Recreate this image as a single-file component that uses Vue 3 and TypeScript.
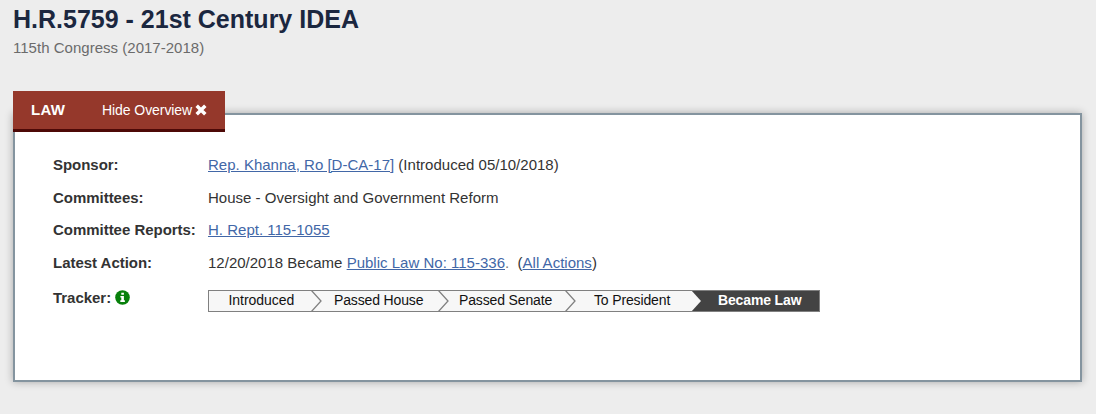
<script setup lang="ts">
interface Step {
  label: string
  kind: string
}

const steps: Step[] = [
  { label: 'Introduced', kind: 'first' },
  { label: 'Passed House', kind: 'house' },
  { label: 'Passed Senate', kind: 'senate' },
  { label: 'To President', kind: 'president' },
  { label: 'Became Law', kind: 'current' },
]
</script>

<template>
  <main class="page">
    <h1 class="title"><span>H.R.5759 - 21st Century IDEA</span></h1>
    <p class="congress"><span>115th Congress (2017-2018)</span></p>

    <section class="overview">
      <div class="tab">
        <strong class="law">LAW</strong>
        <span class="toggle">Hide Overview</span>
        <svg class="close" viewBox="0 0 12 12" width="12" height="12">
          <path d="M1.7 1.7L10.3 10.3M10.3 1.7L1.7 10.3" fill="none" stroke="#fff" stroke-width="3.5" />
        </svg>
      </div>
      <div class="panel">
        <dl class="facts">
          <dt>Sponsor:</dt>
          <dd><a>Rep. Khanna, Ro [D-CA-17]</a> (Introduced 05/10/2018)</dd>
          <dt>Committees:</dt>
          <dd>House - Oversight and Government Reform</dd>
          <dt>Committee Reports:</dt>
          <dd><a>H. Rept. 115-1055</a></dd>
          <dt>Latest Action:</dt>
          <dd>12/20/2018 Became <a>Public Law No: 115-336</a><span class="dot">.</span>&nbsp; (<a>All Actions</a>)</dd>
          <dt class="tracker-label">
            Tracker:
            <svg class="info" viewBox="0 0 15 15" width="15" height="15">
              <circle cx="7.5" cy="7.5" r="7.3" fill="#07800b" />
              <path d="M6.3 2.7h2.6v2.1H6.3zM5.4 6h3.5v4.3h1v1.6H5.3v-1.6h1V7.5h-.9z" fill="#fff" />
            </svg>
          </dt>
          <dd class="tracker-cell">
            <ol class="tracker">
              <li v-for="step in steps" :key="step.label" class="step" :class="step.kind">
                <svg v-if="step.kind !== 'first'" class="chevron" viewBox="0 0 11 20" width="11" height="20">
                  <path
                    d="M0 -1L10 10L0 21"
                    fill="#f7f7f7"
                    :stroke="step.kind === 'current' ? 'none' : '#808080'"
                    stroke-width="1.3"
                  />
                </svg>
                <span>{{ step.label }}</span>
              </li>
            </ol>
          </dd>
        </dl>
      </div>
    </section>
  </main>
</template>

<style>
body {
  background: #ededed;
}
</style>

<style scoped>
.page {
  box-sizing: border-box;
  width: 1096px;
  height: 414px;
  padding: 4px 14px 0 13px;
  overflow: hidden;
  font-family: 'Liberation Sans', Arial, sans-serif;
  color: #333;
}
.title {
  margin: 0;
  font-size: 25px;
  line-height: 30px;
  color: #1b273f;
  white-space: nowrap;
}
.congress {
  margin: 4px 0 0;
  font-size: 15px;
  line-height: 20px;
  letter-spacing: 0.02px;
  color: #6b6b6b;
}
.overview {
  margin-top: 33px;
}
.tab {
  position: relative;
  z-index: 1;
  box-sizing: border-box;
  display: flex;
  align-items: center;
  width: 212px;
  height: 41px;
  padding: 0 18px 1px 18px;
  border-bottom: 3px solid #4d0907;
  background: #95382b;
  color: #fff;
}
.law {
  width: 71px;
  font-size: 15px;
  letter-spacing: 0.3px;
}
.toggle {
  flex: 1;
  font-size: 14px;
  letter-spacing: -0.07px;
  white-space: nowrap;
}
.panel {
  box-sizing: border-box;
  height: 269px;
  margin-top: -19px;
  padding: 34px 38px 0;
  border: 2px solid #84949f;
  background: #fff;
  box-shadow: 0 0 8px rgba(0, 0, 0, 0.3);
}
.facts {
  display: grid;
  grid-template-columns: 155px 1fr;
  grid-template-rows: 33px 32px 33px 36px 30px;
  margin: 0;
  font-size: 15px;
  line-height: 32px;
  letter-spacing: 0.01px;
  white-space: nowrap;
}
dt {
  font-weight: bold;
  letter-spacing: -0.03px;
}
dd {
  margin: 0;
}
a {
  color: #4267a7;
  text-decoration: underline;
}
.dot {
  color: #777;
}
.tracker-label {
  display: flex;
  align-items: center;
  height: 30px;
  gap: 4px;
}
.info {
  margin-top: -1px;
}
.tracker-cell {
  padding-top: 7px;
}
.tracker {
  box-sizing: border-box;
  display: flex;
  width: 612px;
  height: 22px;
  margin: 0;
  padding: 0;
  border: 1px solid #808080;
  list-style: none;
  background: #f7f7f7;
  color: #111;
  font-size: 14px;
  line-height: 19px;
  letter-spacing: -0.14px;
}
.step {
  box-sizing: border-box;
  display: flex;
  width: 127px;
}
.step span {
  margin-left: 12px;
}
.first {
  width: 102px;
  letter-spacing: -0.05px;
}
.first span {
  margin-left: 19.5px;
}
.senate span {
  margin-left: 10px;
}
.president {
  width: 126px;
}
.president span {
  margin-left: 18px;
}
.current {
  flex: 1;
  background: #434343;
  color: #fff;
  font-weight: bold;
}
.current span {
  margin-left: 16px;
}
</style>
